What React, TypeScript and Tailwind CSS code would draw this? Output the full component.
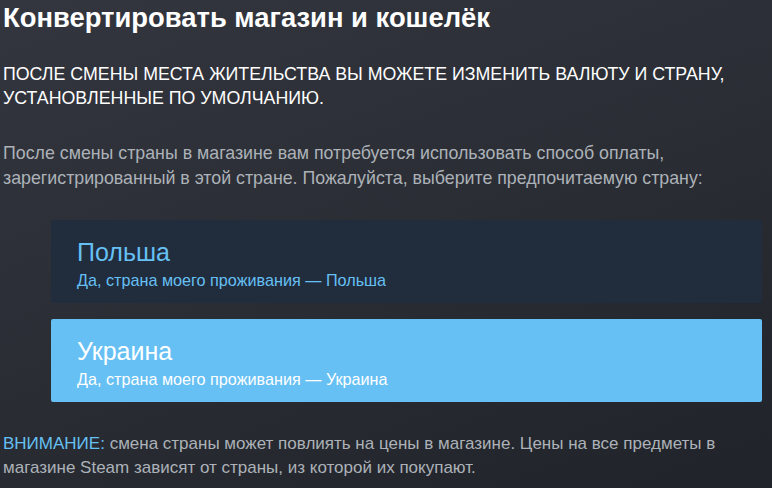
export default function App() {
  const font = { fontFamily: '"Liberation Sans", Arial, sans-serif' };
  return (
    <div
      className="w-[772px] h-[488px] overflow-hidden bg-[linear-gradient(160deg,#33363e_0%,#2a2d34_50%,#202329_100%)]"
      style={font}
    >
      <div className="w-[762px] pl-[3px]">
        <h1 className="pt-[2px] text-[27.4px] leading-[32px] font-bold text-white">
          Конвертировать магазин и кошелёк
        </h1>
        <p className="mt-[28px] text-[17.8px] leading-[24px] text-white uppercase">
          После смены места жительства вы можете изменить валюту и страну, установленные по умолчанию.
        </p>
        <p className="mt-[31px] text-[17.8px] leading-[25px] text-[#acb2b8]">
          После смены страны в магазине вам потребуется использовать способ оплаты, зарегистрированный в этой стране. Пожалуйста, выберите предпочитаемую страну:
        </p>
        <div className="mt-[29px] ml-[48px] flex flex-col gap-[16px]">
          <div className="h-[83px] rounded-[2px] bg-[#212c3d] px-[26px] pt-[18px]">
            <div className="text-[25px] leading-[28px] text-[#66c0f4]">Польша</div>
            <div className="mt-[4px] text-[16.2px] leading-[20px] text-[#66c0f4]">
              Да, страна моего проживания — Польша
            </div>
          </div>
          <div className="h-[83px] rounded-[2px] bg-[#66c0f4] px-[26px] pt-[18px]">
            <div className="text-[25px] leading-[28px] text-white">Украина</div>
            <div className="mt-[4px] text-[16.2px] leading-[20px] text-white">
              Да, страна моего проживания — Украина
            </div>
          </div>
        </div>
        <p className="mt-[30px] text-[17px] leading-[24px] text-[#acb2b8]">
          <span className="text-[#66c0f4]">ВНИМАНИЕ:</span> смена страны может повлиять на цены в магазине. Цены на все предметы в магазине Steam зависят от страны, из которой их покупают.
        </p>
      </div>
    </div>
  );
}
